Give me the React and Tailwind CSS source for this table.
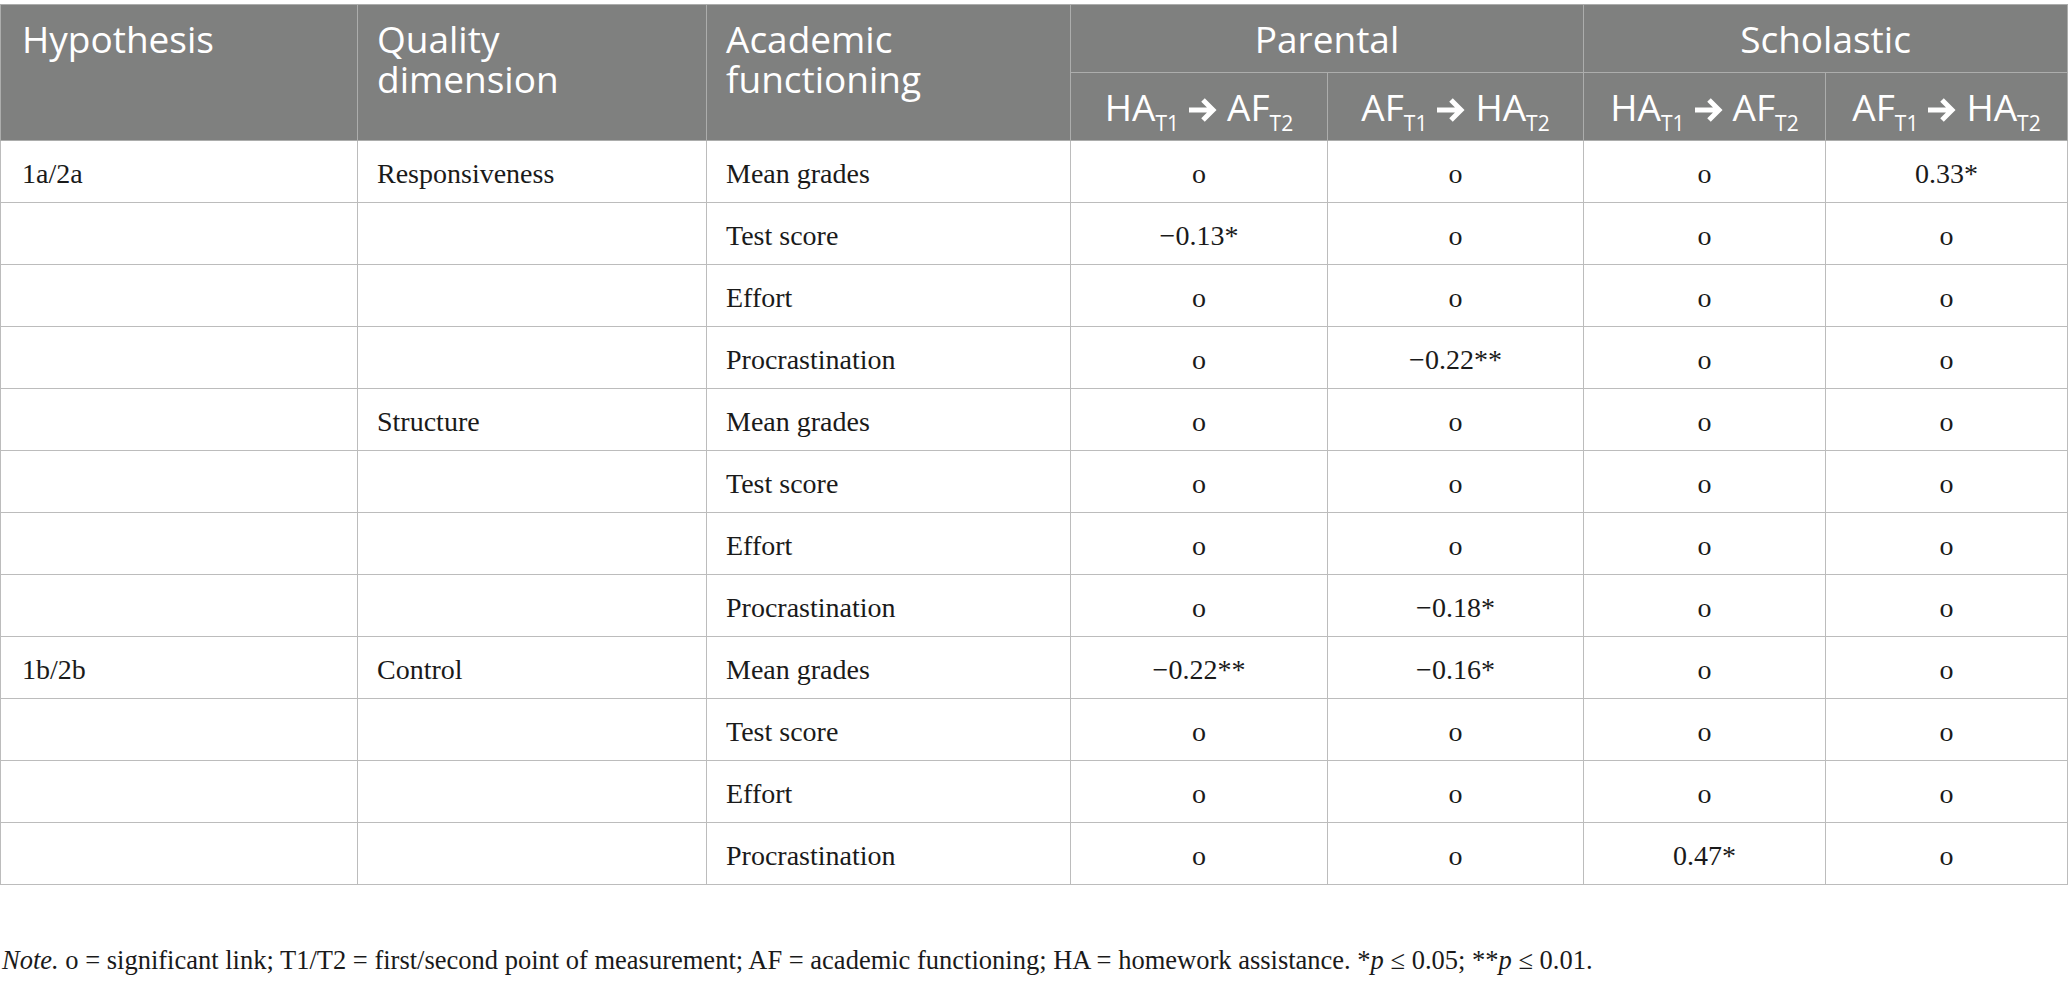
import React from 'react';

const ROWS = [
  ['1a/2a', 'Responsiveness', 'Mean grades', 'o', 'o', 'o', '0.33*'],
  ['', '', 'Test score', '\u22120.13*', 'o', 'o', 'o'],
  ['', '', 'Effort', 'o', 'o', 'o', 'o'],
  ['', '', 'Procrastination', 'o', '\u22120.22**', 'o', 'o'],
  ['', 'Structure', 'Mean grades', 'o', 'o', 'o', 'o'],
  ['', '', 'Test score', 'o', 'o', 'o', 'o'],
  ['', '', 'Effort', 'o', 'o', 'o', 'o'],
  ['', '', 'Procrastination', 'o', '\u22120.18*', 'o', 'o'],
  ['1b/2b', 'Control', 'Mean grades', '\u22120.22**', '\u22120.16*', 'o', 'o'],
  ['', '', 'Test score', 'o', 'o', 'o', 'o'],
  ['', '', 'Effort', 'o', 'o', 'o', 'o'],
  ['', '', 'Procrastination', 'o', 'o', '0.47*', 'o'],
];

const sans = "font-['Open_Sans',sans-serif]";
const serif = "font-['Liberation_Serif','Times_New_Roman',serif]";

function Arrow() {
  return (
    <svg width="32" height="26" viewBox="0 0 32 26" className="mx-[8px] inline-block align-[-2px]">
      <path d="M2 13h24M16 3l10 10-10 10" fill="none" stroke="white" strokeWidth="5" strokeLinejoin="miter" />
    </svg>
  );
}

function Link({ a, b }) {
  return (
    <span className="whitespace-nowrap">
      {a}
      <sub className="text-[21px] align-[-5px]">T1</sub>
      <Arrow />
      {b}
      <sub className="text-[21px] align-[-5px]">T2</sub>
    </span>
  );
}

const th = 'border border-[#acadac] bg-[#7f807f] font-normal text-white';
const td = 'border border-[#bcbcbc] h-[62px] p-0 pt-[5px]';

export default function App() {
  return (
    <div className="min-h-screen bg-white pt-[4px]">
      <table className="w-full table-fixed border-collapse border-t border-t-[#c8c8c8]">
        <colgroup>
          <col className="w-[357px]" />
          <col className="w-[349px]" />
          <col className="w-[364px]" />
          <col className="w-[257px]" />
          <col className="w-[256px]" />
          <col className="w-[242px]" />
          <col />
        </colgroup>
        <thead className={`${sans} text-[37px] leading-[40px]`}>
          <tr className="h-[68px]">
            <th rowSpan={2} className={`${th} px-[21px] pt-[14px] text-left align-top`}>Hypothesis</th>
            <th rowSpan={2} className={`${th} px-[19px] pt-[14px] text-left align-top`}>
              Quality
              <br />
              dimension
            </th>
            <th rowSpan={2} className={`${th} px-[19px] pt-[14px] text-left align-top`}>
              Academic
              <br />
              functioning
            </th>
            <th colSpan={2} className={`${th} text-center align-middle`}>Parental</th>
            <th colSpan={2} className={`${th} text-center align-middle`}>Scholastic</th>
          </tr>
          <tr className="h-[68px]">
            <th className={`${th} text-center`}><Link a="HA" b="AF" /></th>
            <th className={`${th} text-center`}><Link a="AF" b="HA" /></th>
            <th className={`${th} text-center`}><Link a="HA" b="AF" /></th>
            <th className={`${th} text-center`}><Link a="AF" b="HA" /></th>
          </tr>
        </thead>
        <tbody className={`${serif} text-[28px] text-[#1a1a1a]`}>
          {ROWS.map((r, i) => (
            <tr key={i}>
              <td className={`${td} pl-[21px]`}>{r[0]}</td>
              <td className={`${td} pl-[19px]`}>{r[1]}</td>
              <td className={`${td} pl-[19px]`}>{r[2]}</td>
              {r.slice(3).map((v, j) => (
                <td key={j} className={`${td} text-center`}>{v}</td>
              ))}
            </tr>
          ))}
        </tbody>
      </table>

      <p className={`${serif} mt-[58px] pl-[2px] text-[26.5px] leading-[34px] text-[#1a1a1a]`}>
        <i>Note.</i> o = significant link; T1/T2 = first/second point of measurement; AF = academic functioning; HA =
        homework assistance. *<i>p</i> ≤ 0.05; **<i>p</i> ≤ 0.01.
      </p>
    </div>
  );
}
